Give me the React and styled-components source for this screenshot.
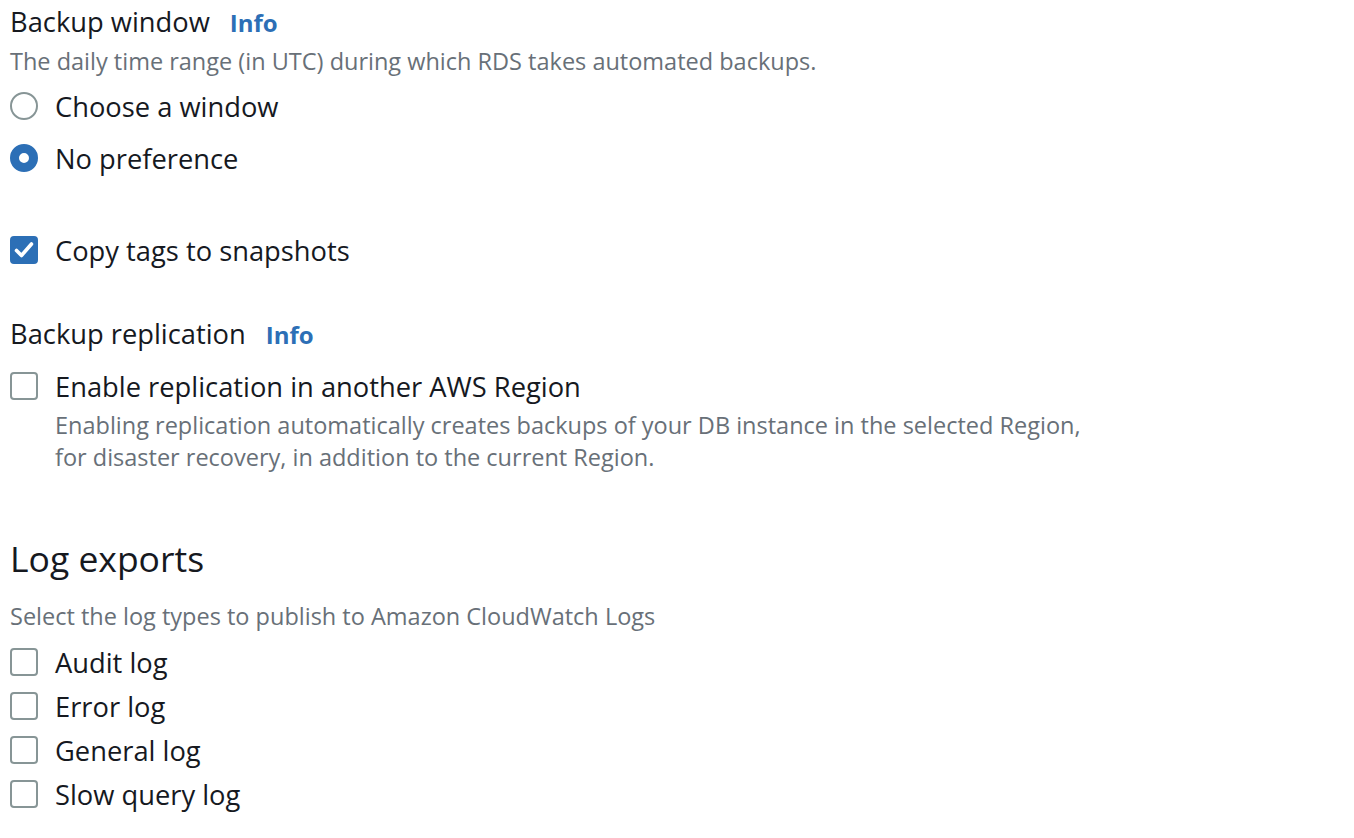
import styled, { createGlobalStyle } from "styled-components"

const GlobalStyle = createGlobalStyle`
    body {
        margin: 0;
        background: #ffffff;
        font-family: "Open Sans", "Noto Sans", sans-serif;
        color: #16191f;
    }
`;

const Page = styled.div`
    width: 1354px;
    height: 838px;
    padding: 4px 0 0 10px;
    box-sizing: border-box;
    overflow: hidden;
`;

const Label = styled.div`
    display: flex;
    align-items: baseline;
    gap: 20px;
    font-size: 27.3px;
    line-height: 36px;
    height: 36px;
    margin-top: ${p => p.$mt || 0}px;
`;

const Info = styled.span`
    color: #2c6fb6;
    font-weight: 700;
    font-size: 24px;
`;

const Description = styled.div`
    color: #687078;
    font-size: 23.5px;
    line-height: 32px;
    margin-top: ${p => p.$mt || 0}px;
    margin-left: ${p => p.$indent ? "45px" : "0"};
`;

const OptionRow = styled.label`
    display: flex;
    align-items: center;
    gap: 17px;
    height: ${p => p.$h || 52}px;
    margin-top: ${p => p.$mt || 0}px;
    font-size: 27.3px;
`;

const Radio = styled.span`
    width: 28px;
    height: 28px;
    box-sizing: border-box;
    border-radius: 50%;
    border: ${p => p.$on ? "9px solid #2c6fb6" : "2px solid #879596"};
    background: #fff;
    flex: none;
`;

const Box = styled.span`
    width: 28px;
    height: 28px;
    box-sizing: border-box;
    border-radius: 4px;
    border: 2px solid ${p => p.$on ? "#2c6fb6" : "#879596"};
    background: ${p => p.$on ? "#2c6fb6" : "#fff"};
    flex: none;
    display: flex;
    align-items: center;
    justify-content: center;
`;

const Heading = styled.h2`
    margin: ${p => p.$mt || 0}px 0 0;
    font-size: 35.5px;
    font-weight: 400;
    line-height: 44px;
`;

const Check = () => (
    <svg width="20" height="18" viewBox="0 0 20 18">
        <path d="M2.5 9.5 L7.5 14.5 L17.5 3" fill="none" stroke="#fff" strokeWidth="3.6" strokeLinecap="round" strokeLinejoin="round" />
    </svg>
)

const logs = ["Audit log", "Error log", "General log", "Slow query log"]

const App = () => {
    return (
        <Page>
            <GlobalStyle />
            <Label>Backup window <Info>Info</Info></Label>
            <Description $mt={5}>The daily time range (in UTC) during which RDS takes automated backups.</Description>
            <OptionRow $mt={3}><Radio />Choose a window</OptionRow>
            <OptionRow><Radio $on />No preference</OptionRow>

            <OptionRow $mt={40}><Box $on><Check /></Box>Copy tags to snapshots</OptionRow>

            <Label $mt={40}>Backup replication <Info>Info</Info></Label>
            <OptionRow $h={44} $mt={12}><Box />Enable replication in another AWS Region</OptionRow>
            <Description $indent $mt={1}>Enabling replication automatically creates backups of your DB instance in the selected Region,<br />for disaster recovery, in addition to the current Region.</Description>

            <Heading $mt={63}>Log exports</Heading>
            <Description $mt={20}>Select the log types to publish to Amazon CloudWatch Logs</Description>
            {logs.map((l, i) => (
                <OptionRow key={l} $h={44} $mt={i === 0 ? 8 : 0}><Box />{l}</OptionRow>
            ))}
        </Page>
    )
}

export default App
